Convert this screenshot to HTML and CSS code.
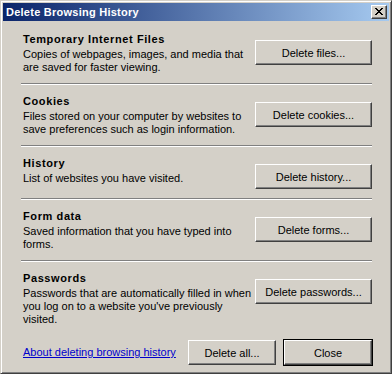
FILE: index.html
```html
<!DOCTYPE html>
<html lang="en">
<head>
  <meta charset="UTF-8">
  <title>Delete Browsing History</title>
  <link rel="stylesheet" href="styles.css">
</head>
<body>
  <div class="window">
    <div class="titlebar">
      <span class="title">Delete Browsing History</span>
      <button class="title-close" aria-label="Close">
        <svg width="8" height="7" viewBox="0 0 8 7" shape-rendering="crispEdges">
          <path d="M0 0h2v1h-2zM6 0h2v1h-2zM1 1h2v1h-2zM5 1h2v1h-2zM2 2h4v1h-4zM3 3h2v1h-2zM2 4h4v1h-4zM1 5h2v1h-2zM5 5h2v1h-2zM0 6h2v1h-2zM6 6h2v1h-2z" fill="#000"/>
        </svg>
      </button>
    </div>

    <div class="content">
      <div class="section first">
        <div class="info">
          <h3>Temporary Internet Files</h3>
          <p>Copies of webpages, images, and media that<br>are saved for faster viewing.</p>
        </div>
        <button class="btn">Delete files...</button>
      </div>
      <hr class="sep">

      <div class="section">
        <div class="info">
          <h3>Cookies</h3>
          <p>Files stored on your computer by websites to<br>save preferences such as login information.</p>
        </div>
        <button class="btn">Delete cookies...</button>
      </div>
      <hr class="sep">

      <div class="section">
        <div class="info">
          <h3>History</h3>
          <p>List of websites you have visited.</p>
        </div>
        <button class="btn">Delete history...</button>
      </div>
      <hr class="sep">

      <div class="section">
        <div class="info">
          <h3>Form data</h3>
          <p>Saved information that you have typed into<br>forms.</p>
        </div>
        <button class="btn">Delete forms...</button>
      </div>
      <hr class="sep">

      <div class="section">
        <div class="info">
          <h3>Passwords</h3>
          <p>Passwords that are automatically filled in when<br>you log on to a website you've previously<br>visited.</p>
        </div>
        <button class="btn">Delete passwords...</button>
      </div>

      <div class="footer">
        <a href="#" class="help-link">About deleting browsing history</a>
        <button class="btn btn-small btn-push">Delete all...</button>
        <button class="btn btn-small btn-default">Close</button>
      </div>
    </div>
  </div>
</body>
</html>
```

FILE: styles.css
```css
:root {
  --face: #d4d0c8;
  --shadow: #808080;
  --dark: #404040;
  --highlight: #ffffff;
  --link: #0000cc;
  --font: "Liberation Sans", Arial, sans-serif;
}
* {
  box-sizing: border-box;
  margin: 0;
  padding: 0;
}
body {
  font-family: var(--font);
  font-size: 11px;
  color: #000;
  background: var(--face);
}
.window {
  width: 392px;
  height: 374px;
  display: flex;
  flex-direction: column;
  padding: 2px;
  background: var(--face);
  border: 1px solid;
  border-color: var(--face) var(--dark) var(--dark) var(--face);
  box-shadow: inset 1px 1px var(--highlight), inset -1px -1px var(--shadow);
}
.titlebar {
  height: 18px;
  display: flex;
  align-items: center;
  justify-content: space-between;
  padding: 0 2px 0 3px;
  background: linear-gradient(to right, #0a246a, #a6caf0);
  color: #fff;
}
.title {
  font-weight: bold;
  letter-spacing: 0.25px;
  line-height: 18px;
}
.title-close {
  width: 16px;
  height: 14px;
  display: flex;
  align-items: center;
  justify-content: center;
  padding: 0 1px 1px 0;
  background: var(--face);
  border: 1px solid;
  border-color: var(--highlight) var(--dark) var(--dark) var(--highlight);
  box-shadow: inset -1px -1px var(--shadow);
}
.title-close svg {
  display: block;
}
.content {
  flex: 1;
  padding: 0 17px 0 18px;
}
.section {
  display: flex;
  justify-content: space-between;
  align-items: flex-start;
  padding: 10px 0 9px;
}
.section.first {
  padding-top: 12px;
}
.info {
  padding-left: 2px;
  white-space: nowrap;
}
.info h3 {
  font-size: 11px;
  font-weight: bold;
  line-height: 13px;
  letter-spacing: 0.6px;
  margin-bottom: 2px;
}
.info p {
  line-height: 13px;
}
.sep {
  height: 0;
  border: 0;
  border-top: 1px solid var(--shadow);
  border-bottom: 1px solid var(--highlight);
}
.btn {
  width: 117px;
  height: 25px;
  margin-top: 7px;
  flex-shrink: 0;
  font: inherit;
  color: #000;
  background: var(--face);
  border: 1px solid;
  border-color: var(--highlight) var(--dark) var(--dark) var(--highlight);
  box-shadow: inset -1px -1px var(--shadow);
}
.footer {
  display: flex;
  align-items: center;
  margin-top: 5px;
  padding-left: 2px;
}
.help-link {
  color: var(--link);
  text-decoration: underline;
  line-height: 13px;
}
.btn-small {
  width: 88px;
  margin-top: 0;
}
.btn-push {
  margin-left: auto;
}
.btn-default {
  margin-left: 8px;
  outline: 1px solid #000;
}
```
